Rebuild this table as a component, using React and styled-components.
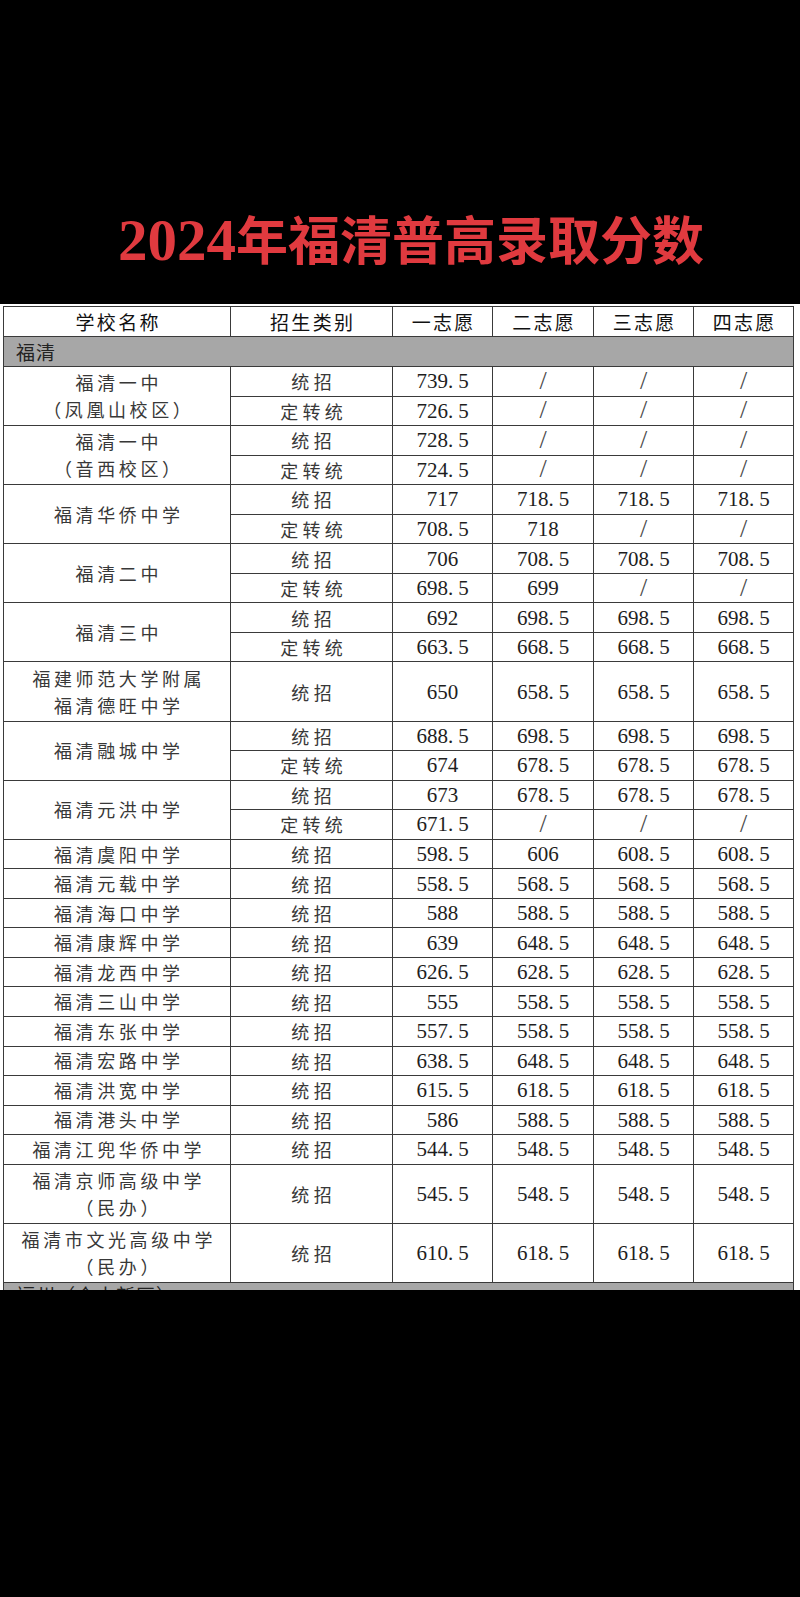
import React from "react";
import styled, { createGlobalStyle } from "styled-components";

const Global = createGlobalStyle`
  html, body {
    margin: 0;
    padding: 0;
    background: #000;
  }
`;

const Page = styled.div`
  width: 800px;
  background: #000;
`;

const Banner = styled.div`
  height: 304px;
  display: flex;
  justify-content: center;
  align-items: flex-start;
  padding-left: 22px;
  box-sizing: border-box;
`;

const Title = styled.h1`
  margin: 204px 0 0;
  color: #e03a3f;
  font-family: "Noto Sans CJK SC", sans-serif;
  font-weight: 700;
  font-size: 52px;
  line-height: 68px;
  white-space: nowrap;
`;

const Year = styled.span`
  font-family: "Liberation Serif", serif;
  font-size: 59px;
  font-weight: 700;
`;

const Sheet = styled.div`
  background: #fff;
  height: 986px;
  box-sizing: border-box;
  overflow: hidden;
  padding: 2px 0 0 3px;
`;

const Table = styled.table`
  border-collapse: collapse;
  table-layout: fixed;
  width: 791px;
  color: #2b2b2b;
`;

const Col = styled.col`
  width: ${(p) => p.$w}px;
`;

const Row = styled.tr`
  height: ${(p) => p.$h || 29.55}px;
`;

const Cell = styled.td`
  border: 1px solid #3a3a3a;
  padding: 0;
  text-align: center;
  vertical-align: middle;
  font-family: "Noto Sans CJK SC", sans-serif;
  font-size: 18px;
  line-height: 24px;
  letter-spacing: ${(p) => p.$ls || 3.6}px;
  text-indent: ${(p) => p.$ls || 3.6}px;
  color: #383838;
  white-space: nowrap;
`;

const HeadCell = styled.th`
  border: 1px solid #3a3a3a;
  padding: 0;
  font-family: "Noto Sans CJK SC", sans-serif;
  font-size: 19px;
  font-weight: 400;
  letter-spacing: 2.3px;
  text-indent: 2.3px;
  color: #111;
  line-height: 24px;
  white-space: nowrap;
`;

const GroupCell = styled.td`
  border: 1px solid #3a3a3a;
  background: #a7a7a7;
  padding: 0 0 0 12px;
  text-align: left;
  font-family: "Noto Sans CJK SC", sans-serif;
  font-size: 19px;
  letter-spacing: 1px;
  color: #222;
  line-height: 24px;
  vertical-align: ${(p) => (p.$cut ? "top" : "middle")};
`;

const NumCell = styled.td`
  border: 1px solid #3a3a3a;
  padding: 0;
  text-align: center;
  vertical-align: middle;
  font-family: "Liberation Serif", serif;
  font-size: 21px;
  line-height: 24px;
  color: #1e1e1e;
`;

const Dot = styled.span`
  margin-right: 5px;
`;

const Slash = styled.span`
  font-family: "Liberation Serif", serif;
  font-size: 26px;
  line-height: 24px;
  color: #4a4a4a;
`;

const Line = styled.div`
  line-height: 27px;
`;

const Score = ({ v }) => {
  if (v === "/") return <Slash>/</Slash>;
  const [a, b] = v.split(".");
  if (b === undefined) return <>{a}</>;
  return (
    <>
      {a}
      <Dot>.</Dot>
      {b}
    </>
  );
};

const grouped = [
  { name: ["福清一中", "（凤凰山校区）"], rows: [["统招", "739.5", "/", "/", "/"], ["定转统", "726.5", "/", "/", "/"]] },
  { name: ["福清一中", "（音西校区）"], rows: [["统招", "728.5", "/", "/", "/"], ["定转统", "724.5", "/", "/", "/"]] },
  { name: ["福清华侨中学"], rows: [["统招", "717", "718.5", "718.5", "718.5"], ["定转统", "708.5", "718", "/", "/"]] },
  { name: ["福清二中"], rows: [["统招", "706", "708.5", "708.5", "708.5"], ["定转统", "698.5", "699", "/", "/"]] },
  { name: ["福清三中"], rows: [["统招", "692", "698.5", "698.5", "698.5"], ["定转统", "663.5", "668.5", "668.5", "668.5"]] },
  { name: ["福建师范大学附属", "福清德旺中学"], tall: true, rows: [["统招", "650", "658.5", "658.5", "658.5"]] },
  { name: ["福清融城中学"], rows: [["统招", "688.5", "698.5", "698.5", "698.5"], ["定转统", "674", "678.5", "678.5", "678.5"]] },
  { name: ["福清元洪中学"], rows: [["统招", "673", "678.5", "678.5", "678.5"], ["定转统", "671.5", "/", "/", "/"]] },
  { name: ["福清虞阳中学"], rows: [["统招", "598.5", "606", "608.5", "608.5"]] },
  { name: ["福清元载中学"], rows: [["统招", "558.5", "568.5", "568.5", "568.5"]] },
  { name: ["福清海口中学"], rows: [["统招", "588", "588.5", "588.5", "588.5"]] },
  { name: ["福清康辉中学"], rows: [["统招", "639", "648.5", "648.5", "648.5"]] },
  { name: ["福清龙西中学"], rows: [["统招", "626.5", "628.5", "628.5", "628.5"]] },
  { name: ["福清三山中学"], rows: [["统招", "555", "558.5", "558.5", "558.5"]] },
  { name: ["福清东张中学"], rows: [["统招", "557.5", "558.5", "558.5", "558.5"]] },
  { name: ["福清宏路中学"], rows: [["统招", "638.5", "648.5", "648.5", "648.5"]] },
  { name: ["福清洪宽中学"], rows: [["统招", "615.5", "618.5", "618.5", "618.5"]] },
  { name: ["福清港头中学"], rows: [["统招", "586", "588.5", "588.5", "588.5"]] },
  { name: ["福清江兜华侨中学"], rows: [["统招", "544.5", "548.5", "548.5", "548.5"]] },
  { name: ["福清京师高级中学", "（民办）"], tall: true, rows: [["统招", "545.5", "548.5", "548.5", "548.5"]] },
  { name: ["福清市文光高级中学", "（民办）"], tall: true, rows: [["统招", "610.5", "618.5", "618.5", "618.5"]] },
];

const widths = [227, 162, 100, 101, 100, 100];
const heads = ["学校名称", "招生类别", "一志愿", "二志愿", "三志愿", "四志愿"];

export default function App() {
  return (
    <Page>
      <Global />
      <Banner>
        <Title>
          <Year>2024</Year>年福清普高录取分数
        </Title>
      </Banner>
      <Sheet>
        <Table>
          <colgroup>
            {widths.map((w, i) => (
              <Col key={i} $w={w} />
            ))}
          </colgroup>
          <tbody>
            <Row $h={30}>
              {heads.map((h) => (
                <HeadCell key={h}>{h}</HeadCell>
              ))}
            </Row>
            <Row $h={30}>
              <GroupCell colSpan={6}>福清</GroupCell>
            </Row>
            {grouped.map((s, si) =>
              s.rows.map((r, ri) => (
                <Row key={`${si}-${ri}`} $h={s.tall ? 59.1 : 29.55}>
                  {ri === 0 && (
                    <Cell rowSpan={s.rows.length}>
                      {s.name.map((n) => (
                        <Line key={n}>{n}</Line>
                      ))}
                    </Cell>
                  )}
                  <Cell $ls={4.3}>{r[0]}</Cell>
                  {r.slice(1).map((v, vi) => (
                    <NumCell key={vi}>
                      <Score v={v} />
                    </NumCell>
                  ))}
                </Row>
              ))
            )}
            <Row $h={30}>
              <GroupCell colSpan={6} $cut>
                福州（仓山新区）
              </GroupCell>
            </Row>
          </tbody>
        </Table>
      </Sheet>
    </Page>
  );
}
